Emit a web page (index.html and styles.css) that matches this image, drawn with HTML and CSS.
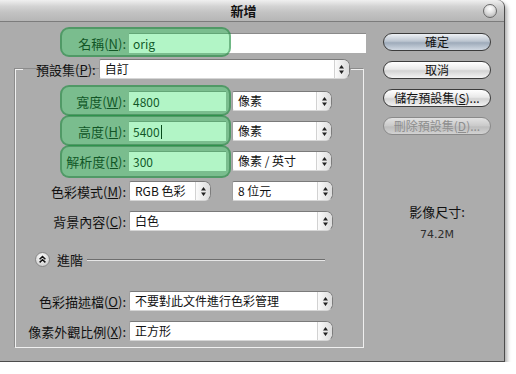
FILE: index.html
```html
<!DOCTYPE html>
<html lang="zh-Hant">
<head>
    <meta charset="UTF-8">
    <title>新增</title>
    <link rel="stylesheet" href="styles.css">
</head>
<body>
    <div class="window">
        <div class="titlebar">
            <span class="title">新增</span>
            <span class="close"></span>
        </div>

        <div class="content">
            <div class="main">
                <div class="row name-row">
                    <span class="lbl">名稱(<u>N</u>):</span>
                    <div class="field name">orig</div>
                    <span class="hl"></span>
                </div>

                <fieldset class="group">
                    <legend class="preset">
                        <span class="plbl">預設集(<u>P</u>):</span>
                        <div class="select preset-sel">
                            <span class="val">自訂</span>
                            <span class="step"><svg width="5" height="9" viewBox="0 0 5 9"><path d="M2.5 0L5 3.5H0z M2.5 9L5 5.5H0z" fill="#222"/></svg></span>
                        </div>
                    </legend>

                    <div class="rows">
                        <div class="row">
                            <span class="lbl">寬度(<u>W</u>):</span>
                            <div class="field num">4800</div>
                            <div class="select unit">
                                <span class="val">像素</span>
                                <span class="step"><svg width="5" height="9" viewBox="0 0 5 9"><path d="M2.5 0L5 3.5H0z M2.5 9L5 5.5H0z" fill="#222"/></svg></span>
                            </div>
                            <span class="hl"></span>
                        </div>
                        <div class="row">
                            <span class="lbl">高度(<u>H</u>):</span>
                            <div class="field num">5400<span class="caret"></span></div>
                            <div class="select unit">
                                <span class="val">像素</span>
                                <span class="step"><svg width="5" height="9" viewBox="0 0 5 9"><path d="M2.5 0L5 3.5H0z M2.5 9L5 5.5H0z" fill="#222"/></svg></span>
                            </div>
                            <span class="hl"></span>
                        </div>
                        <div class="row">
                            <span class="lbl">解析度(<u>R</u>):</span>
                            <div class="field num">300</div>
                            <div class="select unit">
                                <span class="val">像素 / 英寸</span>
                                <span class="step"><svg width="5" height="9" viewBox="0 0 5 9"><path d="M2.5 0L5 3.5H0z M2.5 9L5 5.5H0z" fill="#222"/></svg></span>
                            </div>
                            <span class="hl tall"></span>
                        </div>
                        <div class="row">
                            <span class="lbl">色彩模式(<u>M</u>):</span>
                            <div class="select mode">
                                <span class="val">RGB 色彩</span>
                                <span class="step"><svg width="5" height="9" viewBox="0 0 5 9"><path d="M2.5 0L5 3.5H0z M2.5 9L5 5.5H0z" fill="#222"/></svg></span>
                            </div>
                            <div class="select unit bits">
                                <span class="val">8 位元</span>
                                <span class="step"><svg width="5" height="9" viewBox="0 0 5 9"><path d="M2.5 0L5 3.5H0z M2.5 9L5 5.5H0z" fill="#222"/></svg></span>
                            </div>
                        </div>
                        <div class="row">
                            <span class="lbl">背景內容(<u>C</u>):</span>
                            <div class="select full">
                                <span class="val">白色</span>
                                <span class="step"><svg width="5" height="9" viewBox="0 0 5 9"><path d="M2.5 0L5 3.5H0z M2.5 9L5 5.5H0z" fill="#222"/></svg></span>
                            </div>
                        </div>

                        <div class="advanced">
                            <span class="disclose">
                                <svg width="15" height="15" viewBox="0 0 15 15">
                                    <defs>
                                        <radialGradient id="dg" cx="0.45" cy="0.35" r="0.7">
                                            <stop offset="0" stop-color="#ffffff"/>
                                            <stop offset="1" stop-color="#c9c9c9"/>
                                        </radialGradient>
                                    </defs>
                                    <circle cx="7.5" cy="7.5" r="7" fill="url(#dg)" stroke="#858585"/>
                                    <path d="M4.6 7.2L7.5 4.6L10.4 7.2 M4.6 10.4L7.5 7.8L10.4 10.4" fill="none" stroke="#111" stroke-width="1.5"/>
                                </svg>
                            </span>
                            <span class="adv-text">進階</span>
                            <span class="adv-line"></span>
                        </div>

                        <div class="row">
                            <span class="lbl">色彩描述檔(<u>O</u>):</span>
                            <div class="select full">
                                <span class="val">不要對此文件進行色彩管理</span>
                                <span class="step"><svg width="5" height="9" viewBox="0 0 5 9"><path d="M2.5 0L5 3.5H0z M2.5 9L5 5.5H0z" fill="#222"/></svg></span>
                            </div>
                        </div>
                        <div class="row">
                            <span class="lbl">像素外觀比例(<u>X</u>):</span>
                            <div class="select full">
                                <span class="val">正方形</span>
                                <span class="step"><svg width="5" height="9" viewBox="0 0 5 9"><path d="M2.5 0L5 3.5H0z M2.5 9L5 5.5H0z" fill="#222"/></svg></span>
                            </div>
                        </div>
                    </div>
                </fieldset>
            </div>

            <div class="side">
                <div class="btn primary">確定</div>
                <div class="btn">取消</div>
                <div class="btn">儲存預設集(<u>S</u>)...</div>
                <div class="btn disabled">刪除預設集(<u>D</u>)...</div>

                <div class="info">
                    <div class="info-label">影像尺寸:</div>
                    <div class="info-value">74.2M</div>
                </div>
            </div>
        </div>
    </div>
</body>
</html>
```

FILE: styles.css
```css
body {
    margin: 0;
    background: #ffffff;
    font-family: "Noto Sans CJK TC", "Noto Sans", sans-serif;
    color: #111111;
}

u {
    text-decoration: underline;
    text-underline-offset: 1px;
}

.window {
    width: 505px;
    height: 362px;
    box-sizing: border-box;
    background: #acacac;
    border-right: 1px solid #4c4c4c;
    border-bottom: 1px solid #4c4c4c;
    border-top-right-radius: 7px;
    box-shadow: 2px 3px 4px rgba(0, 0, 0, 0.35);
}

/* title bar */
.titlebar {
    height: 22px;
    box-sizing: border-box;
    display: flex;
    align-items: center;
    border-bottom: 1px solid #7c7c7c;
    border-top-right-radius: 7px;
    background: linear-gradient(#f0f0f0, #d3d3d3 30%, #c2c2c2 60%, #b6b6b6);
}

.title {
    flex: 1;
    text-align: center;
    font-size: 13px;
    font-weight: bold;
    line-height: 22px;
    padding-left: 4px;
}

.close {
    width: 12px;
    height: 12px;
    margin-right: 7px;
    border-radius: 50%;
    border: 1px solid #6a6a6a;
    background: radial-gradient(circle at 50% 30%, #ffffff 0, #e4e4e4 40%, #a9a9a9 100%);
}

.content {
    display: flex;
}

.main {
    width: 383px;
    padding-top: 11px;
}

/* rows */
.row {
    position: relative;
    display: flex;
    align-items: center;
    height: 20px;
}

.lbl {
    width: 110px;
    flex: none;
    text-align: right;
    font-size: 13px;
    white-space: nowrap;
    margin-right: 3px;
}

.name-row .lbl {
    width: 126px;
}

.field {
    height: 20px;
    box-sizing: border-box;
    background: #ffffff;
    border-top: 1px solid #8a8a8a;
    font-size: 12px;
    line-height: 19px;
    padding-left: 4px;
    display: flex;
    align-items: center;
}

.field.name {
    width: 237px;
}

.field.num {
    width: 97px;
    margin-right: 6px;
}

.caret {
    display: inline-block;
    width: 0;
    height: 14px;
    border-left: 1px solid #000;
    margin-left: 1px;
}

/* green highlight marks */
.hl {
    position: absolute;
    left: 44px;
    top: -6px;
    width: 171px;
    height: 31px;
    box-sizing: border-box;
    border: 2px solid rgba(30, 110, 55, 0.45);
    border-radius: 9px;
    background: rgba(22, 224, 82, 0.33);
    pointer-events: none;
}

.name-row .hl {
    left: 60px;
    height: 30px;
}

.hl.tall {
    height: 33px;
}

/* popup selects */
.select {
    height: 20px;
    box-sizing: border-box;
    display: flex;
    align-items: stretch;
    background: #ffffff;
    border-top: 1px solid #7a7a7a;
    border-left: 1px solid #a0a0a0;
    border-bottom: 1px solid #d6d6d6;
    border-right: 1px solid #7d7d7d;
    border-radius: 2px 7px 7px 2px;
    font-size: 12px;
}

.select .val {
    flex: 1;
    padding-left: 5px;
    line-height: 18px;
    white-space: nowrap;
}

.select .step {
    width: 14px;
    display: flex;
    align-items: center;
    justify-content: center;
    border-left: 1px solid #d2d2d2;
    border-radius: 0 6px 6px 0;
    background: linear-gradient(to right, #fbfbfb, #dcdcdc);
}

.select.unit {
    width: 100px;
}

.select.mode {
    width: 82px;
    margin-right: 21px;
}

.select.bits {
    width: 101px;
}

.select.full {
    width: 204px;
}

/* group box */
.group {
    margin: 6px 0 0 15px;
    padding: 0 0 6px 0;
    width: 349px;
    box-sizing: border-box;
    min-width: 0;
    border: 1px solid #f0f0f0;
    box-shadow: -1px -1px 0 #8c8c8c;
}

.preset {
    margin-left: 7px;
    padding: 0 1px 0 13px;
    display: flex;
    align-items: center;
    height: 20px;
}

.plbl {
    font-size: 13px;
    white-space: nowrap;
    margin-right: 3px;
}

.select.preset-sel {
    width: 251px;
}

.rows {
    padding-top: 12px;
    display: flex;
    flex-direction: column;
    gap: 10px;
}

/* advanced disclosure */
.advanced {
    display: flex;
    align-items: center;
    height: 15px;
    margin: 11px 0 14px 0;
}

.disclose {
    display: flex;
    margin-left: 19px;
}

.adv-text {
    font-size: 13px;
    margin-left: 7px;
}

.adv-line {
    flex: 1;
    height: 0;
    border-top: 1px solid #6e6e6e;
    border-bottom: 1px solid #e6e6e6;
    margin: 0 38px 0 4px;
}

.rows .advanced + .row {
    margin-top: 0;
}

/* side buttons */
.side {
    width: 108px;
    padding-top: 11px;
    display: flex;
    flex-direction: column;
    gap: 10px;
}

.btn {
    height: 18px;
    box-sizing: border-box;
    border: 1px solid #3c3c3c;
    border-radius: 9px;
    background: linear-gradient(#ffffff, #e9e9e9 45%, #d3d3d3 55%, #f3f3f3);
    font-size: 12px;
    line-height: 16px;
    text-align: center;
    white-space: nowrap;
}

.btn.primary {
    background: linear-gradient(#eef1f5, #bcc5d0 45%, #9eabba 55%, #d0d8e2);
}

.btn.disabled {
    color: #8e8e8e;
    border-color: #8a8a8a;
    background: linear-gradient(#e2e2e2, #c9c9c9 50%, #bdbdbd 55%, #d2d2d2);
}

.info {
    margin-top: 58px;
    text-align: center;
}

.info-label {
    font-size: 13px;
    line-height: 18px;
}

.info-value {
    margin-top: 7px;
    font-family: "DejaVu Sans", sans-serif;
    font-size: 11px;
    color: #2e2e2e;
}
```
